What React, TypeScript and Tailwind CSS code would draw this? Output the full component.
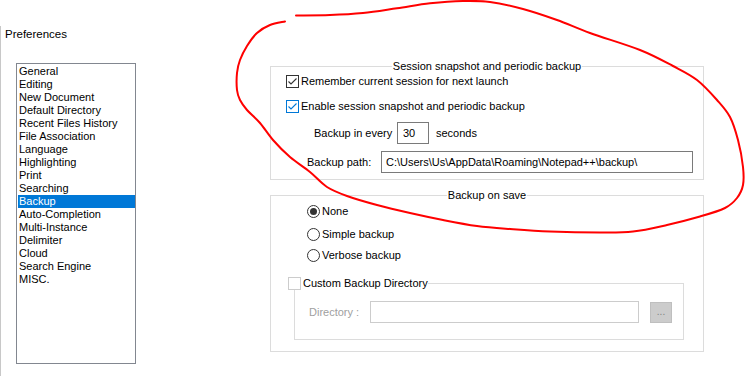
const FONT = "font-['Liberation_Sans',Arial,sans-serif]";

const pages = [
  'General',
  'Editing',
  'New Document',
  'Default Directory',
  'Recent Files History',
  'File Association',
  'Language',
  'Highlighting',
  'Print',
  'Searching',
  'Backup',
  'Auto-Completion',
  'Multi-Instance',
  'Delimiter',
  'Cloud',
  'Search Engine',
  'MISC.',
];

// hand-drawn annotation loop, traced from the screenshot
const loop: [number, number][] = [
  [285, 21.5], [270, 25], [257, 33], [247, 46], [240, 60], [237, 73], [237, 90],
  [240, 100], [247, 110], [260, 123], [273, 140], [290, 157], [310, 172], [327, 187],
  [347, 196], [377, 205], [410, 213], [443, 220], [477, 226], [510, 229], [550, 231.5],
  [600, 232.5], [633, 231.5], [667, 225], [700, 216.5], [725, 208], [737, 198],
  [743, 185], [743, 167], [738, 140], [730, 117], [717, 100], [697, 80], [673, 66],
  [640, 50], [590, 33], [557, 20], [523, 9], [490, 2], [463, 1], [430, 3.3],
  [397, 8.3], [363, 13], [330, 15], [296, 15.5],
];

function smoothPath(pts: [number, number][]) {
  let d = `M${pts[0][0]} ${pts[0][1]}`;
  for (let i = 0; i < pts.length - 1; i++) {
    const p0 = pts[i - 1] || pts[i];
    const p1 = pts[i];
    const p2 = pts[i + 1];
    const p3 = pts[i + 2] || p2;
    const c1x = p1[0] + (p2[0] - p0[0]) / 6;
    const c1y = p1[1] + (p2[1] - p0[1]) / 6;
    const c2x = p2[0] - (p3[0] - p1[0]) / 6;
    const c2y = p2[1] - (p3[1] - p1[1]) / 6;
    d += ` C${c1x.toFixed(1)} ${c1y.toFixed(1)} ${c2x.toFixed(1)} ${c2y.toFixed(1)} ${p2[0]} ${p2[1]}`;
  }
  return d;
}

function CheckBox({ tone, checked }: { tone: 'dark' | 'blue' | 'off'; checked?: boolean }) {
  const border =
    tone === 'blue' ? 'border-[#0078d7]' : tone === 'dark' ? 'border-[#333333]' : 'border-[#cccccc]';
  const stroke = tone === 'blue' ? '#0078d7' : '#333333';
  return (
    <span className={`flex h-[13px] w-[13px] shrink-0 items-center justify-center border bg-white ${border}`}>
      {checked && (
        <svg width="11" height="11" viewBox="0 0 11 11" aria-hidden="true">
          <path d="M1.5 5.5 L4 8 L9.5 2.5" fill="none" stroke={stroke} strokeWidth={1.1} />
        </svg>
      )}
    </span>
  );
}

function Radio({ checked }: { checked?: boolean }) {
  return (
    <span className="flex h-[13px] w-[13px] shrink-0 items-center justify-center rounded-full border border-[#333333] bg-white">
      {checked && <span className="h-[7px] w-[7px] rounded-full bg-[#333333]" />}
    </span>
  );
}

function GroupBox({ title, height, className = '', children }: { title: string; height: string; className?: string; children: React.ReactNode }) {
  return (
    <div className={`relative w-[434px] border border-[#dcdcdc] ${height} ${className}`}>
      <span className="absolute -top-[8px] left-1/2 -translate-x-1/2 whitespace-nowrap bg-white px-[1px] leading-[14px]">
        {title}
      </span>
      {children}
    </div>
  );
}

export default function App() {
  return (
    <div className={`relative flex h-[376px] w-[748px] overflow-hidden bg-white text-[11px] leading-[14px] text-black ${FONT}`}>
      <div className="mt-[26px] w-[1px] bg-[#c8c8c8]" />

      <div className="flex w-[269px] flex-col">
        <div className="ml-[4px] mt-[27px] text-[11.5px]">Preferences</div>
        <div className="ml-[15px] mt-[22px] h-[301px] w-[120px] border border-[#828790] bg-white pl-[1px] pt-[1px]">
          {pages.map((page) => (
            <div
              key={page}
              className={`h-[13px] whitespace-nowrap pl-[1px] leading-[13px] ${page === 'Backup' ? 'bg-[#0078d7] text-white' : ''}`}
            >
              {page}
            </div>
          ))}
        </div>
      </div>

      <div className="flex flex-col pt-[66px]">
        <GroupBox title="Session snapshot and periodic backup" height="h-[114px]">
          <label className="ml-[15px] mt-[7px] flex h-[14px] items-center gap-[2px]">
            <CheckBox tone="dark" checked />
            <span>Remember current session for next launch</span>
          </label>
          <label className="ml-[15px] mt-[11px] flex h-[14px] items-center gap-[2px]">
            <CheckBox tone="blue" checked />
            <span>Enable session snapshot and periodic backup</span>
          </label>
          <div className="ml-[43px] mt-[9px] flex h-[22px] items-center">
            <span className="w-[83px] shrink-0 whitespace-nowrap">Backup in every</span>
            <span className="flex h-[22px] w-[32px] items-center border border-[#7a7a7a] pl-[5px]">30</span>
            <span className="ml-[7px]">seconds</span>
          </div>
          <div className="ml-[36px] mt-[7px] flex h-[22px] items-center">
            <span className="w-[74px] shrink-0 whitespace-nowrap">Backup path:</span>
            <span className="flex h-[22px] w-[312px] items-center whitespace-nowrap border border-[#7a7a7a] pl-[4px]">
              C:\Users\Us\AppData\Roaming\Notepad++\backup\
            </span>
          </div>
        </GroupBox>

        <GroupBox title="Backup on save" height="h-[157px]" className="mt-[15px]">
          <label className="ml-[36px] mt-[8px] flex h-[14px] items-center gap-[2px]">
            <Radio checked />
            <span>None</span>
          </label>
          <label className="ml-[36px] mt-[9px] flex h-[14px] items-center gap-[2px]">
            <Radio />
            <span>Simple backup</span>
          </label>
          <label className="ml-[36px] mt-[7px] flex h-[14px] items-center gap-[2px]">
            <Radio />
            <span>Verbose backup</span>
          </label>

          <div className="relative ml-[23px] mt-[21px] h-[57px] w-[390px] border border-[#dcdcdc]">
            <label className="absolute -left-[7px] -top-[8px] flex h-[14px] items-center gap-[2px] bg-white">
              <CheckBox tone="off" />
              <span>Custom Backup Directory</span>
            </label>
            <div className="ml-[14px] mt-[17px] flex h-[22px] items-center">
              <span className="w-[61px] text-[#a0a0a0]">Directory :</span>
              <span className="h-[22px] w-[269px] border border-[#cccccc]" />
              <span className="ml-[11px] flex h-[21px] w-[22px] items-center justify-center border border-[#bfbfbf] bg-[#cccccc] text-[10px] leading-[10px] text-[#838383]">
                ...
              </span>
            </div>
          </div>
        </GroupBox>
      </div>

      <svg className="pointer-events-none absolute inset-0" width="748" height="376" viewBox="0 0 748 376" aria-hidden="true">
        <path d={smoothPath(loop)} fill="none" stroke="#ff0000" strokeWidth={2} strokeLinecap="round" strokeLinejoin="round" />
      </svg>
    </div>
  );
}
